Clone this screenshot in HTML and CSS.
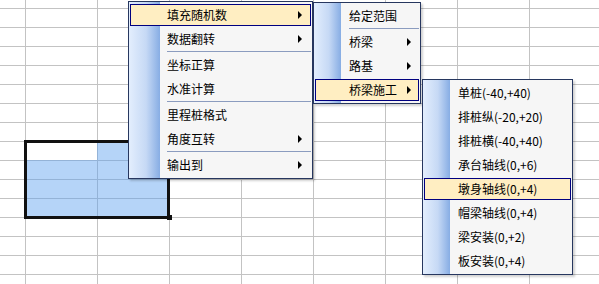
FILE: index.html
```html
<!DOCTYPE html>
<html lang="zh-CN">
<head>
<meta charset="utf-8">
<title>菜单</title>
<link rel="stylesheet" href="styles.css">
</head>
<body>
<div class="sheet">
  <div class="selection">
    <div class="sel-row">
      <div class="active-cell"></div>
      <div class="fill"></div>
    </div>
    <div class="fill fill-rest"></div>
    <div class="handle"></div>
  </div>

  <div class="menu menu-main">
    <div class="item hot"><span class="label">填充随机数</span><span class="arrow"></span></div>
    <div class="item"><span class="label">数据翻转</span><span class="arrow"></span></div>
    <div class="sep"></div>
    <div class="item"><span class="label">坐标正算</span></div>
    <div class="item"><span class="label">水准计算</span></div>
    <div class="sep"></div>
    <div class="item"><span class="label">里程桩格式</span></div>
    <div class="item"><span class="label">角度互转</span><span class="arrow"></span></div>
    <div class="sep"></div>
    <div class="item"><span class="label">输出到</span><span class="arrow"></span></div>
  </div>

  <div class="menu menu-sub">
    <div class="item"><span class="label">给定范围</span></div>
    <div class="sep"></div>
    <div class="item"><span class="label">桥梁</span><span class="arrow"></span></div>
    <div class="item"><span class="label">路基</span><span class="arrow"></span></div>
    <div class="item hot"><span class="label">桥梁施工</span><span class="arrow"></span></div>
  </div>

  <div class="menu menu-sub2">
    <div class="item"><span class="label">单桩(-40,+40)</span></div>
    <div class="item"><span class="label">排桩纵(-20,+20)</span></div>
    <div class="item"><span class="label">排桩横(-40,+40)</span></div>
    <div class="item"><span class="label">承台轴线(0,+6)</span></div>
    <div class="item hot"><span class="label">墩身轴线(0,+4)</span></div>
    <div class="item"><span class="label">帽梁轴线(0,+4)</span></div>
    <div class="item"><span class="label">梁安装(0,+2)</span></div>
    <div class="item"><span class="label">板安装(0,+4)</span></div>
  </div>
</div>
</body>
</html>
```

FILE: styles.css
```css
html, body {
  margin: 0;
  padding: 0;
  background: #fff;
}

body {
  overflow: hidden;
}

.sheet {
  position: relative;
  width: 599px;
  height: 284px;
  overflow: hidden;
  background-color: #fff;
  background-image:
    linear-gradient(to right, #c3c3c3 1px, transparent 1px),
    linear-gradient(to bottom, #c3c3c3 1px, transparent 1px);
  background-size: 72px 19px;
  background-position: 25px 8px;
}

/* selected range */
.selection {
  position: absolute;
  left: 24px;
  top: 140px;
  width: 146px;
  height: 79px;
  box-sizing: border-box;
  border: 3px solid #111;
  display: flex;
  flex-direction: column;
}

.sel-row {
  display: flex;
  height: 17px;
}

.active-cell {
  width: 70px;
}

.fill {
  flex: 1;
  background: rgba(92, 160, 240, 0.45);
}

.fill-rest {
  flex: 1;
}

.handle {
  position: absolute;
  left: 140px;
  top: 72px;
  width: 5px;
  height: 5px;
  background: #111;
}

/* menus */
.menu {
  position: absolute;
  box-sizing: border-box;
  display: flex;
  flex-direction: column;
  border: 1px solid #27375f;
  padding: 1px;
  background:
    linear-gradient(to right, #e3eefd 0, #c6d9f5 calc(var(--gut) * 0.55), #87ade4 var(--gut), #f6f6f6 var(--gut));
  box-shadow: 2px 2px 2px rgba(0, 0, 0, 0.18);
  font-family: "Noto Sans CJK SC", "Microsoft YaHei", sans-serif;
  font-size: 12px;
  color: #000;
}

.menu-main {
  --gut: 31px;
  --tx: 36px;
  --sx: 37px;
  left: 128px;
  top: 1px;
  width: 185px;
}

.menu-sub {
  --gut: 27px;
  --tx: 33px;
  --sx: 34px;
  left: 313px;
  top: 2px;
  width: 108px;
}

.menu-sub2 {
  --gut: 27px;
  --tx: 33px;
  --sx: 34px;
  left: 422px;
  top: 79px;
  width: 151px;
}

.item {
  display: flex;
  align-items: center;
  box-sizing: border-box;
  height: 22px;
  margin: 1px 0;
  border: 1px solid transparent;
  padding-left: var(--tx);
  padding-right: 7px;
  white-space: nowrap;
}

.menu-main .item {
  padding-right: 8px;
}

.item.hot {
  background: #ffeec2;
  border-color: #000080;
}

.label {
  flex: 1;
  line-height: 20px;
}

.arrow {
  width: 0;
  height: 0;
  border-left: 4px solid #000;
  border-top: 4px solid transparent;
  border-bottom: 4px solid transparent;
}

.sep {
  height: 1px;
  margin: 0 0 1px var(--sx);
  background: #8b9cbf;
}
```
